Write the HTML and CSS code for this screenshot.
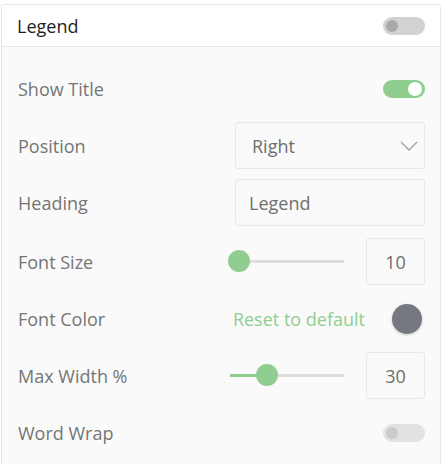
FILE: index.html
```html
<!DOCTYPE html>
<html>
<head>
    <title>Legend Settings</title>
    <link rel="stylesheet" href="styles.css">
</head>
<body>
    <div class="panel">
        <div class="panel-header">
            <span class="panel-title">Legend</span>
            <span class="toggle"></span>
        </div>

        <div class="panel-body">
            <div class="row">
                <span class="label">Show Title</span>
                <span class="toggle on"></span>
            </div>

            <div class="row">
                <span class="label">Position</span>
                <div class="select">
                    <span>Right</span>
                    <svg class="chevron" width="18" height="10" viewBox="0 0 18 10">
                        <path d="M1 1 L9 9 L17 1" fill="none" stroke="#a0a0a0" stroke-width="1.3"/>
                    </svg>
                </div>
            </div>

            <div class="row spaced">
                <span class="label">Heading</span>
                <div class="text-input">Legend</div>
            </div>

            <div class="row">
                <span class="label">Font Size</span>
                <div class="slider-group">
                    <div class="slider">
                        <div class="slider-fill" style="width: 9px;"></div>
                        <div class="slider-knob" style="left: 9px;"></div>
                    </div>
                    <div class="number-input">10</div>
                </div>
            </div>

            <div class="row">
                <span class="label">Font Color</span>
                <div class="color-group">
                    <span class="reset-link">Reset to default</span>
                    <span class="swatch"></span>
                </div>
            </div>

            <div class="row">
                <span class="label">Max Width %</span>
                <div class="slider-group">
                    <div class="slider">
                        <div class="slider-fill" style="width: 37px;"></div>
                        <div class="slider-knob" style="left: 37px;"></div>
                    </div>
                    <div class="number-input">30</div>
                </div>
            </div>

            <div class="row">
                <span class="label">Word Wrap</span>
                <span class="toggle disabled"></span>
            </div>
        </div>
    </div>
</body>
</html>
```

FILE: styles.css
```css
body {
    margin: 0;
    font-family: "Open Sans", "Noto Sans", sans-serif;
    background: #ffffff;
}
.panel {
    margin: 4px 0 0 1px;
    width: 440px;
    box-sizing: border-box;
    border: 1px solid #e6e6e6;
    border-radius: 4px;
    background: #fafafa;
    overflow: hidden;
}
.panel-header {
    height: 42px;
    box-sizing: border-box;
    background: #ffffff;
    border-bottom: 1px solid #e6e6e6;
    display: flex;
    align-items: center;
    justify-content: space-between;
    padding: 0 15px 0 15px;
}
.panel-title {
    font-size: 18px;
    color: #1e1e1e;
}
.panel-body {
    padding: 18px 15px 8px 16px;
}
.row {
    height: 47px;
    margin-bottom: 10px;
    display: flex;
    align-items: center;
    justify-content: space-between;
}
.row.spaced {
    margin-bottom: 12px;
}
.label {
    font-size: 18px;
    color: #757575;
}
.toggle {
    position: relative;
    width: 42px;
    height: 18px;
    border-radius: 9px;
    background: #d2d2d2;
}
.toggle::after {
    content: "";
    position: absolute;
    left: 3px;
    top: 3px;
    width: 12px;
    height: 12px;
    border-radius: 50%;
    background: #a9a9a9;
}
.toggle.on {
    background: #8fce8f;
}
.toggle.on::after {
    left: auto;
    right: 3px;
    top: 2px;
    width: 14px;
    height: 14px;
    background: #ffffff;
}
.toggle.disabled {
    background: #e2e2e2;
}
.toggle.disabled::after {
    background: #cbcbcb;
}
.select,
.text-input {
    width: 190px;
    height: 47px;
    box-sizing: border-box;
    border: 1px solid #e8e8e8;
    border-radius: 3px;
    background: #fafafa;
    display: flex;
    align-items: center;
    justify-content: space-between;
    padding: 0 6px 0 16px;
    font-size: 18px;
    color: #6e6e6e;
}
.text-input {
    padding-left: 13px;
}
.slider-group {
    display: flex;
    align-items: center;
    gap: 22px;
}
.slider {
    position: relative;
    width: 114px;
    height: 3px;
    background: #dddddd;
}
.slider-fill {
    height: 3px;
    background: #8fce8f;
}
.slider-knob {
    position: absolute;
    top: -10px;
    width: 22px;
    height: 22px;
    margin-left: -11px;
    border-radius: 50%;
    background: #90cd90;
}
.number-input {
    width: 59px;
    height: 47px;
    box-sizing: border-box;
    border: 1px solid #e8e8e8;
    border-radius: 3px;
    display: flex;
    align-items: center;
    justify-content: center;
    font-size: 18px;
    color: #6e6e6e;
}
.color-group {
    display: flex;
    align-items: center;
    gap: 27px;
    margin-right: 3px;
}
.reset-link {
    font-size: 18px;
    color: #8fce8f;
}
.swatch {
    width: 30px;
    height: 30px;
    border-radius: 50%;
    background: #76787f;
    box-shadow: 0 1px 3px rgba(0,0,0,0.2);
}
```
